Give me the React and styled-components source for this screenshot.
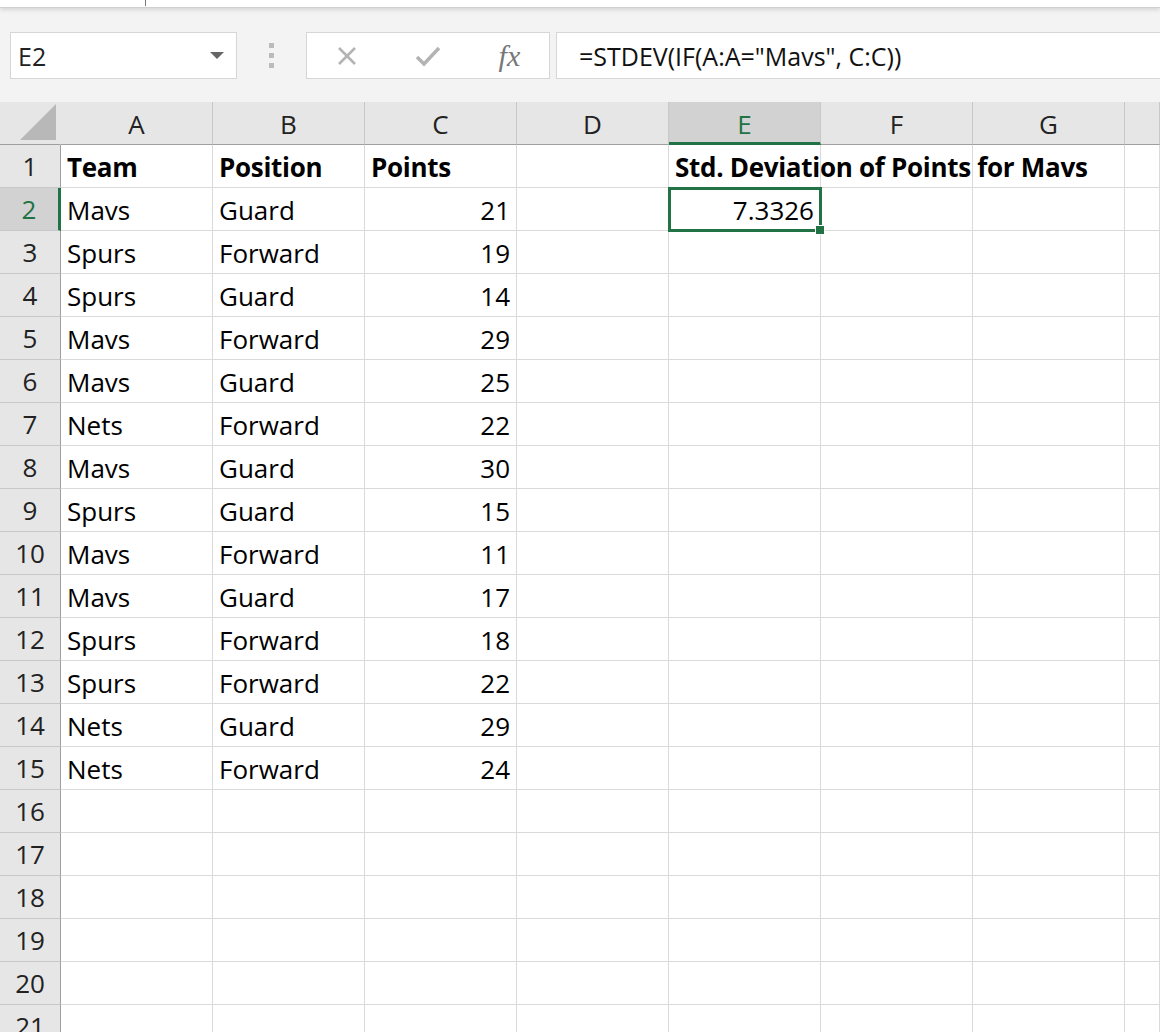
import React from "react";
import styled, { createGlobalStyle } from "styled-components";

const Global = createGlobalStyle`
  body { margin: 0; background: #fff; font-family: "Open Sans", Lato, sans-serif; overflow: hidden; }
`;

const TopStrip = styled.div`
  height: 7px;
  background: #fff;
  border-bottom: 1px solid #d0d0d0;
  box-shadow: 0 2px 4px rgba(0,0,0,0.12);
  position: relative;
  &::after { content: ""; position: absolute; left: 145px; top: 0; width: 1px; height: 6px; background: #777; }
`;

const Toolbar = styled.div`
  height: 94px;
  background: #f3f3f3;
  display: flex;
  align-items: flex-start;
  padding-top: 24px;
  box-sizing: border-box;
`;

const NameBox = styled.div`
  margin-left: 10px;
  width: 227px;
  height: 47px;
  background: #fff;
  border: 1px solid #d6d6d6;
  box-sizing: border-box;
  display: flex;
  align-items: center;
  justify-content: space-between;
  padding: 0 12px 0 7px;
  font-size: 25px;
  color: #222;
`;

const Caret = styled.span`
  width: 0; height: 0;
  border-left: 7px solid transparent;
  border-right: 7px solid transparent;
  border-top: 7px solid #666;
`;

const Dots = styled.div`
  width: 69px;
  display: flex;
  flex-direction: column;
  align-items: center;
  gap: 5px;
  padding-top: 11px;
  span { width: 5px; height: 5px; background: #bbb; }
`;

const FxBox = styled.div`
  width: 244px;
  height: 47px;
  background: #fff;
  border: 1px solid #d6d6d6;
  box-sizing: border-box;
  display: flex;
  align-items: center;
  justify-content: space-around;
  color: #b0b0b0;
`;

const Fx = styled.span`
  font-family: "Liberation Serif", serif;
  font-style: italic;
  font-size: 30px;
  color: #777;
`;

const Formula = styled.div`
  margin-left: 6px;
  flex: 1;
  height: 47px;
  background: #fff;
  border: 1px solid #d6d6d6;
  border-right: none;
  box-sizing: border-box;
  display: flex;
  align-items: center;
  padding-left: 22px;
  font-size: 25px;
  color: #111;
`;

const Grid = styled.div`
  display: grid;
  grid-template-columns: 61px repeat(7, 152px) 1fr;
  grid-auto-rows: 43px;
`;

const Head = styled.div`
  background: ${p => (p.active ? "#d2d2d2" : "#e6e6e6")};
  border-right: 1px solid ${p => (p.corner ? "#e6e6e6" : "#c8c8c8")};
  border-bottom: ${p => (p.active ? "3px solid #217346" : "1px solid #9f9f9f")};
  color: ${p => (p.active ? "#217346" : "#222")};
  box-sizing: border-box;
  display: flex;
  align-items: flex-end;
  justify-content: center;
  padding-bottom: ${p => (p.active ? "0px" : "2px")};
  font-size: 26px;
  position: relative;
`;

const Corner = styled.div`
  position: absolute;
  right: 4px; bottom: 4px;
  width: 0; height: 0;
  border-left: 36px solid transparent;
  border-bottom: 36px solid #b8b8b8;
`;

const RowHead = styled.div`
  background: ${p => (p.active ? "#d2d2d2" : "#e6e6e6")};
  border-bottom: 1px solid #c8c8c8;
  border-right: ${p => (p.active ? "3px solid #217346" : "1px solid #9f9f9f")};
  color: ${p => (p.active ? "#217346" : "#222")};
  box-sizing: border-box;
  display: flex;
  align-items: center;
  justify-content: center;
  font-size: 26px;
`;

const Cell = styled.div`
  border-right: 1px solid #dadada;
  border-bottom: 1px solid #dadada;
  box-sizing: border-box;
  display: flex;
  align-items: center;
  justify-content: ${p => (p.num ? "flex-end" : "flex-start")};
  padding: 2px 6px 0;
  font-size: 26px;
  font-weight: ${p => (p.bold ? 700 : 400)};
  letter-spacing: ${p => (p.bold ? "-0.3px" : "0")};
  color: #000;
  white-space: nowrap;
  overflow: visible;
  position: relative;
  z-index: ${p => (p.over ? 2 : 1)};
`;

const Selected = styled(Cell)`
  outline: 3px solid #217346;
  outline-offset: -2px;
  z-index: 3;
  &::after {
    content: ""; position: absolute; right: -5px; bottom: -5px;
    width: 8px; height: 8px; background: #217346; border: 1px solid #fff;
  }
`;

const data = [
  ["Mavs", "Guard", 21], ["Spurs", "Forward", 19], ["Spurs", "Guard", 14],
  ["Mavs", "Forward", 29], ["Mavs", "Guard", 25], ["Nets", "Forward", 22],
  ["Mavs", "Guard", 30], ["Spurs", "Guard", 15], ["Mavs", "Forward", 11],
  ["Mavs", "Guard", 17], ["Spurs", "Forward", 18], ["Spurs", "Forward", 22],
  ["Nets", "Guard", 29], ["Nets", "Forward", 24],
];

const cols = ["A", "B", "C", "D", "E", "F", "G", ""];

export default function App() {
  const rows = [];
  for (let r = 1; r <= 21; r++) {
    const d = r >= 2 && r <= 15 ? data[r - 2] : null;
    rows.push(<RowHead key={"h" + r} active={r === 2}>{r}</RowHead>);
    for (let c = 0; c < 8; c++) {
      const k = r + "-" + c;
      if (r === 1) {
        const t = ["Team", "Position", "Points", "", "Std. Deviation of Points for Mavs"][c];
        rows.push(<Cell key={k} bold over={c === 4}>{t || ""}</Cell>);
      } else if (r === 2 && c === 4) {
        rows.push(<Selected key={k} num>7.3326</Selected>);
      } else if (d && c < 3) {
        rows.push(<Cell key={k} num={c === 2}>{d[c]}</Cell>);
      } else {
        rows.push(<Cell key={k} />);
      }
    }
  }
  return (
    <>
      <Global />
      <TopStrip />
      <Toolbar>
        <NameBox>E2<Caret /></NameBox>
        <Dots><span /><span /><span /></Dots>
        <FxBox>
          <svg width="22" height="22" viewBox="0 0 22 22"><path d="M3 3L19 19M19 3L3 19" stroke="#b3b3b3" strokeWidth="2.5" /></svg>
          <svg width="26" height="22" viewBox="0 0 26 22"><path d="M2 12L9 19L24 3" stroke="#b3b3b3" strokeWidth="3.5" fill="none" /></svg>
          <Fx>fx</Fx>
        </FxBox>
        <Formula>=STDEV(IF(A:A="Mavs", C:C))</Formula>
      </Toolbar>
      <Grid>
        <Head corner><Corner /></Head>
        {cols.map((c, i) => <Head key={i} active={c === "E"}>{c}</Head>)}
        {rows}
      </Grid>
    </>
  );
}
